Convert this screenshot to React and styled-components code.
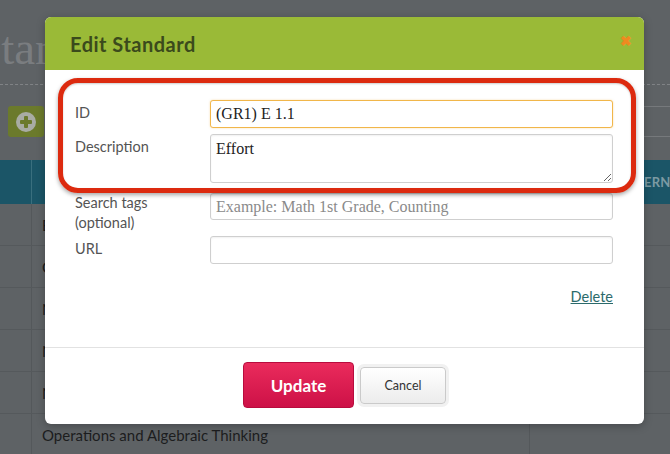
import React from "react";
import styled, { createGlobalStyle } from "styled-components";

const Global = createGlobalStyle`
  html, body { margin: 0; padding: 0; }
  body {
    background: #5e6265;
    overflow: hidden;
    font-family: "Lato", "Open Sans", sans-serif;
  }
`;

const Page = styled.div`
  position: relative;
  width: 670px;
  height: 454px;
  overflow: hidden;
  background: #5e6265;
`;

const TitleBar = styled.div`
  height: 85px;
  box-sizing: border-box;
  border-bottom: 1px dashed #808386;
  padding-top: 25px;
`;

const PageTitle = styled.h1`
  margin: 0 0 0 -25px;
  font-family: "Liberation Serif", "DejaVu Serif", serif;
  font-weight: 400;
  font-size: 47px;
  line-height: 46px;
  color: #7a7d80;
`;

const Toolbar = styled.div`
  height: 75px;
  box-sizing: border-box;
  padding: 21px 0 0 8px;
  display: flex;
  align-items: flex-start;
`;

const AddButton = styled.div`
  width: 36px;
  height: 31px;
  border-radius: 3px;
  background: #6b7a2c;
  display: flex;
  align-items: center;
  justify-content: center;
`;

const SearchBox = styled.div`
  margin-left: auto;
  width: 300px;
  height: 31px;
  box-sizing: border-box;
  border-top: 1px solid #76797c;
  border-bottom: 1px solid #76797c;
`;

const Table = styled.div`
  display: flex;
  flex-direction: column;
`;

const HeaderRow = styled.div`
  height: 44px;
  background: #1b5567;
  display: grid;
  grid-template-columns: 32px 498px 1fr;
`;

const HeadCell = styled.div`
  border-right: ${(p) => (p.$divider ? "1px solid #3a6f7e" : "none")};
  color: #7c9aa3;
  font-weight: 700;
  font-size: 13px;
  letter-spacing: 0.3px;
  display: flex;
  align-items: center;
  padding-left: ${(p) => p.$pad || 0}px;
  white-space: nowrap;
  overflow: hidden;
`;

const Row = styled.div`
  height: 42px;
  box-sizing: border-box;
  border-bottom: 1px solid #55595c;
  display: grid;
  grid-template-columns: 32px 498px 1fr;
`;

const Cell = styled.div`
  border-right: ${(p) => (p.$divider ? "1px solid #54585b" : "none")};
  color: #1c1d1e;
  font-size: 15px;
  display: flex;
  align-items: center;
  padding-left: ${(p) => p.$pad || 0}px;
  white-space: nowrap;
`;

const Modal = styled.div`
  position: absolute;
  left: 45px;
  top: 17px;
  width: 599px;
  height: 407px;
  background: #fff;
  border-radius: 6px;
  overflow: hidden;
  display: flex;
  flex-direction: column;
  box-shadow: 0 2px 8px rgba(0, 0, 0, 0.25);
`;

const ModalHeader = styled.div`
  height: 53px;
  flex: none;
  background: #9aba37;
  display: flex;
  align-items: center;
  padding: 0 12px 0 25px;
`;

const ModalTitle = styled.h2`
  margin: 0;
  flex: 1;
  font-family: "Lato", sans-serif;
  font-weight: 700;
  font-size: 20px;
  color: #3b4a1c;
  letter-spacing: 0.5px;
`;

const Close = styled.span`
  color: #ef8a20;
  font-weight: 700;
  font-size: 14px;
  line-height: 1;
  margin-top: -6px;
`;

const ModalBody = styled.div`
  flex: 1;
  padding: 30px 31px 0 30px;
  display: flex;
  flex-direction: column;
`;

const FieldRow = styled.div`
  display: grid;
  grid-template-columns: 135px 1fr;
  margin-bottom: ${(p) => p.$gap}px;
`;

const Label = styled.label`
  font-family: "Lato", sans-serif;
  font-size: 14.5px;
  line-height: 20px;
  color: #545454;
  padding-top: ${(p) => p.$top ?? 3}px;
`;

const SubLabel = styled.span`
  display: block;
`;

const fieldCss = `
  box-sizing: border-box;
  width: 100%;
  border: 1px solid #cfcfcf;
  border-radius: 3px;
  box-shadow: inset 0 1px 2px rgba(0,0,0,0.06);
  font-family: "Liberation Serif", "DejaVu Serif", serif;
  font-size: 16px;
  color: #222;
  padding: 4px 5px;
  outline: none;
  background: #fff;
  &::placeholder { color: #8a8a8a; }
`;

const Input = styled.input`
  ${fieldCss}
  height: ${(p) => p.$h || 28}px;
  border-color: ${(p) => (p.$focus ? "#f1b64a" : "#cfcfcf")};
  box-shadow: ${(p) =>
    p.$focus ? "0 0 2px rgba(241,182,74,0.5)" : "inset 0 1px 2px rgba(0,0,0,0.06)"};
`;

const TextArea = styled.textarea`
  ${fieldCss}
  height: 49px;
  resize: vertical;
  display: block;
  padding-top: 5px;
`;

const DeleteRow = styled.div`
  display: flex;
  justify-content: flex-end;
  margin-top: 24px;
`;

const DeleteLink = styled.a`
  font-family: "Lato", sans-serif;
  font-size: 14.5px;
  color: #2b6a6b;
  text-decoration: underline;
  cursor: pointer;
`;

const ModalFooter = styled.div`
  flex: none;
  height: 77px;
  box-sizing: border-box;
  border-top: 1px solid #e2e2e2;
  display: flex;
  align-items: center;
  justify-content: center;
  gap: 6px;
  padding-bottom: 2px;
`;

const PrimaryButton = styled.button`
  width: 111px;
  height: 46px;
  border-radius: 4px;
  border: 1px solid #b80c3e;
  background: linear-gradient(#ea2b5c, #cd1147);
  color: #fff;
  font-family: "Lato", sans-serif;
  font-weight: 700;
  font-size: 17px;
  cursor: pointer;
`;

const SecondaryButton = styled.button`
  width: 86px;
  height: 37px;
  border-radius: 4px;
  border: 1px solid #cacaca;
  background: linear-gradient(#ffffff, #ececec);
  box-shadow: 0 0 0 3px #f1f1f1;
  color: #333;
  font-family: "Lato", sans-serif;
  font-size: 12.5px;
  cursor: pointer;
`;

const Highlight = styled.div`
  position: absolute;
  left: 58px;
  top: 78px;
  width: 578px;
  height: 115px;
  box-sizing: border-box;
  border: 5px solid #dc2a0f;
  border-radius: 20px;
  box-shadow: 0 2px 4px rgba(0, 0, 0, 0.35), inset 0 1px 2px rgba(0,0,0,0.2);
  pointer-events: none;
`;

const rows = [
  "Expressions and Equations",
  "Counting and Cardinality",
  "Number and Operations in Base Ten",
  "Number and Operations\u2014Fractions",
  "Number System",
  "Operations and Algebraic Thinking",
];

export default function App() {
  return (
    <Page>
      <Global />
      <TitleBar>
        <PageTitle>Standards</PageTitle>
      </TitleBar>
      <Toolbar>
        <AddButton>
          <svg width="22" height="22" viewBox="0 0 22 22">
            <circle cx="11" cy="11" r="10" fill="#a9aca4" />
            <rect x="9" y="5" width="4" height="12" rx="1" fill="#6b7a2c" />
            <rect x="5" y="9" width="12" height="4" rx="1" fill="#6b7a2c" />
          </svg>
        </AddButton>
        <SearchBox />
      </Toolbar>
      <Table>
        <HeaderRow>
          <HeadCell $divider />
          <HeadCell $pad={24}>NAME</HeadCell>
          <HeadCell $pad={89}>EXTERNAL ID</HeadCell>
        </HeaderRow>
        {rows.map((r) => (
          <Row key={r}>
            <Cell $divider />
            <Cell $pad={10} $divider>{r}</Cell>
            <Cell />
          </Row>
        ))}
      </Table>

      <Modal>
        <ModalHeader>
          <ModalTitle>Edit Standard</ModalTitle>
          <Close>✖</Close>
        </ModalHeader>
        <ModalBody>
          <FieldRow $gap={6}>
            <Label>ID</Label>
            <Input $focus defaultValue="(GR1) E 1.1" />
          </FieldRow>
          <FieldRow $gap={10}>
            <Label>Description</Label>
            <TextArea defaultValue="Effort" />
          </FieldRow>
          <FieldRow $gap={3}>
            <Label $top={0}>
              Search tags
              <SubLabel>(optional)</SubLabel>
            </Label>
            <Input $h={27} placeholder="Example: Math 1st Grade, Counting" />
          </FieldRow>
          <FieldRow $gap={0}>
            <Label>URL</Label>
            <Input />
          </FieldRow>
          <DeleteRow>
            <DeleteLink>Delete</DeleteLink>
          </DeleteRow>
        </ModalBody>
        <ModalFooter>
          <PrimaryButton>Update</PrimaryButton>
          <SecondaryButton>Cancel</SecondaryButton>
        </ModalFooter>
      </Modal>
      <Highlight />
    </Page>
  );
}
